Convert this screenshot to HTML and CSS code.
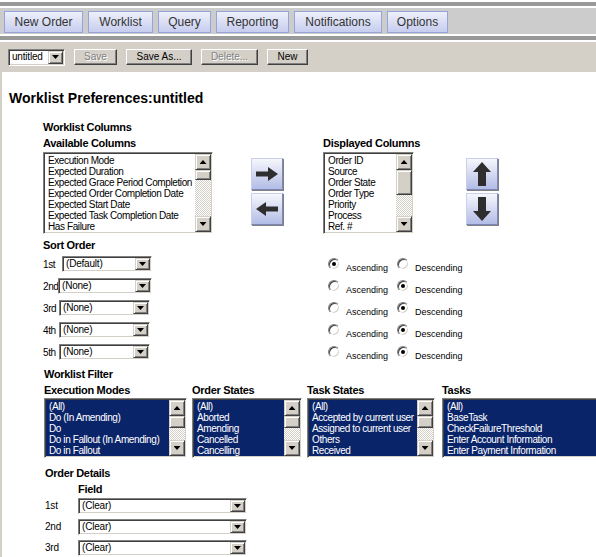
FILE: index.html
```html
<!DOCTYPE html>
<html>
<head>
<meta charset="utf-8">
<title>Worklist Preferences</title>
<link rel="stylesheet" href="styles.css">
</head>
<body>
<div class="band"></div>
<nav class="nav">
  <span class="navbtn nb1">New Order</span>
  <span class="navbtn nb2">Worklist</span>
  <span class="navbtn nb3">Query</span>
  <span class="navbtn nb4">Reporting</span>
  <span class="navbtn nb5">Notifications</span>
  <span class="navbtn nb6">Options</span>
</nav>
<div class="band"></div>
<div class="toolbar">
  <div class="combo tb-combo"><span class="ctext">untitled</span><span class="dd"></span></div>
  <span class="tbtn disabled tb-save">Save</span>
  <span class="tbtn tb-saveas">Save As...</span>
  <span class="tbtn disabled tb-delete">Delete...</span>
  <span class="tbtn tb-new">New</span>
</div>
<main class="main">
  <h1 class="title">Worklist Preferences:untitled</h1>

  <section class="cols">
    <div class="head h-cols">Worklist Columns</div>
    <div class="colrow">
      <div class="col col-avail">
        <div class="head">Available Columns</div>
        <div class="listbox lb-cols">
          <div class="items">
            <div>Execution Mode</div>
            <div>Expected Duration</div>
            <div>Expected Grace Period Completion</div>
            <div>Expected Order Completion Date</div>
            <div>Expected Start Date</div>
            <div>Expected Task Completion Date</div>
            <div>Has Failure</div>
          </div>
          <div class="vscroll"><span class="sbtn up"></span><span class="thumb th-avail"></span><span class="track"></span><span class="sbtn down"></span></div>
        </div>
      </div>
      <div class="bigbtns lr">
        <span class="bigbtn"><svg width="22" height="14" viewBox="0 0 22 14"><path d="M0 4.5H12V0L22 7L12 14V9.5H0Z" fill="#2e2e2e"/></svg></span>
        <span class="bigbtn"><svg width="22" height="14" viewBox="0 0 22 14"><path d="M22 4.5H10V0L0 7L10 14V9.5H22Z" fill="#2e2e2e"/></svg></span>
      </div>
      <div class="col col-disp">
        <div class="head">Displayed Columns</div>
        <div class="listbox lb-cols">
          <div class="items">
            <div>Order ID</div>
            <div>Source</div>
            <div>Order State</div>
            <div>Order Type</div>
            <div>Priority</div>
            <div>Process</div>
            <div>Ref. #</div>
          </div>
          <div class="vscroll"><span class="sbtn up"></span><span class="thumb th-disp"></span><span class="track"></span><span class="sbtn down"></span></div>
        </div>
      </div>
      <div class="bigbtns ud">
        <span class="bigbtn"><svg width="18" height="24" viewBox="0 0 18 24"><path d="M9 0L18 10H13V24H5V10H0Z" fill="#2e2e2e"/></svg></span>
        <span class="bigbtn"><svg width="18" height="24" viewBox="0 0 18 24"><path d="M9 24L18 14H13V0H5V14H0Z" fill="#2e2e2e"/></svg></span>
      </div>
    </div>
  </section>

  <section class="sort">
    <div class="head h-sort">Sort Order</div>
    <div class="srow">
      <div class="sleft"><span class="slabel">1st</span><div class="combo sel s1"><span class="ctext">(Default)</span><span class="dd"></span></div></div>
      <div class="radios"><span class="ropt first"><span class="radio on"></span><span class="rtext">Ascending</span></span><span class="ropt"><span class="radio"></span><span class="rtext">Descending</span></span></div>
    </div>
    <div class="srow">
      <div class="sleft"><span class="slabel">2nd</span><div class="combo sel s2"><span class="ctext">(None)</span><span class="dd"></span></div></div>
      <div class="radios"><span class="ropt first"><span class="radio"></span><span class="rtext">Ascending</span></span><span class="ropt"><span class="radio on"></span><span class="rtext">Descending</span></span></div>
    </div>
    <div class="srow">
      <div class="sleft"><span class="slabel">3rd</span><div class="combo sel s3"><span class="ctext">(None)</span><span class="dd"></span></div></div>
      <div class="radios"><span class="ropt first"><span class="radio"></span><span class="rtext">Ascending</span></span><span class="ropt"><span class="radio on"></span><span class="rtext">Descending</span></span></div>
    </div>
    <div class="srow">
      <div class="sleft"><span class="slabel">4th</span><div class="combo sel s3"><span class="ctext">(None)</span><span class="dd"></span></div></div>
      <div class="radios"><span class="ropt first"><span class="radio"></span><span class="rtext">Ascending</span></span><span class="ropt"><span class="radio on"></span><span class="rtext">Descending</span></span></div>
    </div>
    <div class="srow">
      <div class="sleft"><span class="slabel">5th</span><div class="combo sel s3"><span class="ctext">(None)</span><span class="dd"></span></div></div>
      <div class="radios"><span class="ropt first"><span class="radio"></span><span class="rtext">Ascending</span></span><span class="ropt"><span class="radio on"></span><span class="rtext">Descending</span></span></div>
    </div>
  </section>

  <section class="filter">
    <div class="head">Worklist Filter</div>
    <div class="fcols">
      <div class="fcol fc1">
        <div class="head">Execution Modes</div>
        <div class="listbox lb-filter">
          <div class="items selected">
            <div>(All)</div><div>Do (In Amending)</div><div>Do</div><div>Do in Fallout (In Amending)</div><div>Do in Fallout</div>
          </div>
          <div class="vscroll"><span class="sbtn up"></span><span class="thumb th-filter"></span><span class="track"></span><span class="sbtn down"></span></div>
        </div>
      </div>
      <div class="fcol fc2">
        <div class="head">Order States</div>
        <div class="listbox lb-filter">
          <div class="items selected">
            <div>(All)</div><div>Aborted</div><div>Amending</div><div>Cancelled</div><div>Cancelling</div>
          </div>
          <div class="vscroll"><span class="sbtn up"></span><span class="thumb th-filter"></span><span class="track"></span><span class="sbtn down"></span></div>
        </div>
      </div>
      <div class="fcol fc3">
        <div class="head">Task States</div>
        <div class="listbox lb-filter">
          <div class="items selected">
            <div>(All)</div><div>Accepted by current user</div><div>Assigned to current user</div><div>Others</div><div>Received</div>
          </div>
          <div class="vscroll"><span class="sbtn up"></span><span class="thumb th-filter"></span><span class="track"></span><span class="sbtn down"></span></div>
        </div>
      </div>
      <div class="fcol fc4">
        <div class="head">Tasks</div>
        <div class="listbox lb-filter">
          <div class="items selected">
            <div>(All)</div><div>BaseTask</div><div>CheckFailureThreshold</div><div>Enter Account Information</div><div>Enter Payment Information</div>
          </div>
        </div>
      </div>
    </div>
  </section>

  <section class="details">
    <div class="head">Order Details</div>
    <div class="drow dhead"><span class="dlabel"></span><span class="head">Field</span></div>
    <div class="drow"><span class="dlabel">1st</span><div class="combo dsel"><span class="ctext">(Clear)</span><span class="dd"></span></div></div>
    <div class="drow"><span class="dlabel">2nd</span><div class="combo dsel"><span class="ctext">(Clear)</span><span class="dd"></span></div></div>
    <div class="drow"><span class="dlabel">3rd</span><div class="combo dsel"><span class="ctext">(Clear)</span><span class="dd"></span></div></div>
  </section>
</main>
</body>
</html>
```

FILE: styles.css
```css
* { box-sizing: border-box; }
html, body { margin: 0; padding: 0; }
body {
  width: 596px;
  height: 557px;
  overflow: hidden;
  background: #fff;
  padding-top: 2px;
  display: flex;
  flex-direction: column;
  font-family: "Liberation Sans", Arial, sans-serif;
  font-size: 10px;
  letter-spacing: -0.2px;
  color: #000;
}

/* ---------- top bars ---------- */
.band { height: 4px; background: #999; flex: none; }
.nav {
  flex: none;
  height: 26px;
  margin: 2px 0;
  background: #ccc;
  display: flex;
  gap: 5px;
  padding: 3px 0 0 4px;
}
.navbtn {
  height: 22px;
  border: 1px solid #97a4da;
  background: linear-gradient(#eef0fa, #c6cdee);
  font: 12px/20px "Liberation Sans", Arial, sans-serif;
  letter-spacing: 0;
  color: #333;
  text-align: center;
}
.nb1 { width: 79px; }
.nb2 { width: 65px; }
.nb3 { width: 53px; }
.nb4 { width: 73px; }
.nb5 { width: 88px; }
.nb6 { width: 61px; }

.toolbar {
  flex: none;
  margin-top: 2px;
  height: 30px;
  background: #d4d0c8;
  display: flex;
  align-items: center;
  gap: 9px;
  padding-left: 8px;
}
.tbtn {
  height: 16px;
  line-height: 14px;
  text-align: center;
  letter-spacing: 0;
  background: #d4d0c8;
  border: 1px solid;
  border-color: #fff #404040 #404040 #fff;
  box-shadow: inset -1px -1px #808080;
}
.tbtn.disabled { color: #808080; text-shadow: 1px 1px #fff; }
.tb-save { width: 43px; }
.tb-saveas { width: 66px; }
.tb-delete { width: 57px; }
.tb-new { width: 41px; }

/* ---------- combo boxes ---------- */
.combo {
  display: flex;
  height: 16px;
  padding: 1px;
  background: #fff;
  border: 1px solid;
  border-color: #808080 #fff #fff #808080;
  box-shadow: inset 1px 1px #404040, inset -1px -1px #d4d0c8;
}
.ctext { flex: 1; padding-left: 2px; line-height: 12px; white-space: nowrap; overflow: hidden; }
.dd, .sbtn {
  flex: none;
  display: flex;
  align-items: center;
  justify-content: center;
  background: #d4d0c8;
  border: 1px solid;
  border-color: #d4d0c8 #404040 #404040 #d4d0c8;
  box-shadow: inset 1px 1px #fff, inset -1px -1px #808080;
}
.dd { width: 15px; height: 12px; }
.dd::after, .sbtn::after {
  content: "";
  width: 7px;
  height: 4px;
  background: #000;
  clip-path: polygon(0 0, 7px 0, 3.5px 4px);
}
.sbtn.up::after { clip-path: polygon(3.5px 0, 7px 4px, 0 4px); }
.tb-combo { width: 57px; height: 17px; }
.tb-combo .dd { height: 13px; }

/* ---------- main ---------- */
.main {
  flex: 1;
  border-left: 2px solid #d4d0c8;
}
.title {
  margin: 18px 0 0 7px;
  font: bold 14px/16px "Liberation Sans", Arial, sans-serif;
  letter-spacing: 0;
}
.head {
  font: bold 11px/16px "Liberation Sans", Arial, sans-serif;
  letter-spacing: -0.3px;
  white-space: nowrap;
}

/* ---------- list boxes ---------- */
.listbox {
  display: flex;
  padding: 1px;
  background: #fff;
  border: 1px solid;
  border-color: #808080 #fff #fff #808080;
  box-shadow: inset 1px 1px #404040, inset -1px -1px #d4d0c8;
}
.items {
  flex: 1;
  min-width: 0;
  overflow: hidden;
  padding: 1px 0 0 3px;
  line-height: 11px;
  white-space: nowrap;
  letter-spacing: -0.4px;
}
.items.selected { background: #0a246a; color: #fff; }
.vscroll { flex: none; width: 16px; display: flex; flex-direction: column; }
.sbtn { height: 16px; }
.thumb {
  flex: none;
  background: #d4d0c8;
  border: 1px solid;
  border-color: #d4d0c8 #404040 #404040 #d4d0c8;
  box-shadow: inset 1px 1px #fff, inset -1px -1px #808080;
}
.track {
  flex: 1;
  background: repeating-conic-gradient(#d4d0c8 0 25%, #fff 0 50%) 0 0 / 2px 2px;
}
.th-avail { height: 10px; }
.th-disp { height: 25px; }
.th-filter { height: 12px; }

/* ---------- columns section ---------- */
.cols { margin-left: 41px; }
.h-cols { margin-top: 13px; }
.colrow { display: flex; }
.lb-cols { height: 82px; margin-top: 1px; }
.col-avail { width: 170px; }
.col-disp { width: 91px; margin-left: 40px; }
.bigbtns {
  display: flex;
  flex-direction: column;
  gap: 3px;
  padding-top: 23px;
}
.bigbtns.lr { margin-left: 38px; }
.bigbtns.ud { margin-left: 52px; }
.bigbtn {
  width: 32px;
  height: 32px;
  display: flex;
  align-items: center;
  justify-content: center;
  border: 1px solid;
  border-color: #c9cfec #7c88b8 #7c88b8 #c9cfec;
  background: linear-gradient(#f6f7fc, #b2bce6);
  box-shadow: 1px 1px 0 #808080;
}

/* ---------- sort ---------- */
.sort { margin: 4px 0 0 41px; }
.h-sort { line-height: 15px; }
.srow { display: flex; height: 22px; }
.sleft { width: 285px; height: 22px; display: flex; align-items: center; }
.slabel { width: 16px; white-space: nowrap; letter-spacing: -0.4px; }
.sel { width: 91px; }
.sel.s1 { margin-left: 3px; width: 90px; }
.sel.s2 { margin-left: -1px; width: 94px; }
.radios { display: flex; }
.ropt { display: flex; }
.ropt.first { width: 69px; }
.radio {
  position: relative;
  margin-top: 5px;
  width: 12px;
  height: 12px;
  border-radius: 50%;
  background: #fff;
  border: 1px solid;
  border-color: #808080 #fff #fff #808080;
  box-shadow: inset 1px 1px #404040, inset -1px -1px #d4d0c8;
}
.radio.on::after {
  content: "";
  position: absolute;
  left: 3px;
  top: 3px;
  width: 4px;
  height: 4px;
  border-radius: 50%;
  background: #000;
}
.rtext { margin: 10px 0 0 6px; font-size: 9px; line-height: 11px; letter-spacing: 0; }

/* ---------- filter ---------- */
.filter { margin: 3px 0 0 42px; }
.fcols { display: flex; }
.fcol { flex: none; }
.fc1 { width: 143px; }
.fc2 { width: 110px; margin-left: 5px; }
.fc3 { width: 128px; margin-left: 5px; }
.fc4 { width: 170px; margin-left: 7px; }
.lb-filter { height: 60px; }

/* ---------- details ---------- */
.details { margin: 7px 0 0 43px; }
.drow { display: flex; height: 21px; align-items: flex-start; }
.drow .combo { margin-top: 1px; }
.drow .dlabel { line-height: 18px; }
.dhead { height: 16px; }
.dlabel { width: 33px; }
.dsel { width: 169px; }
```
